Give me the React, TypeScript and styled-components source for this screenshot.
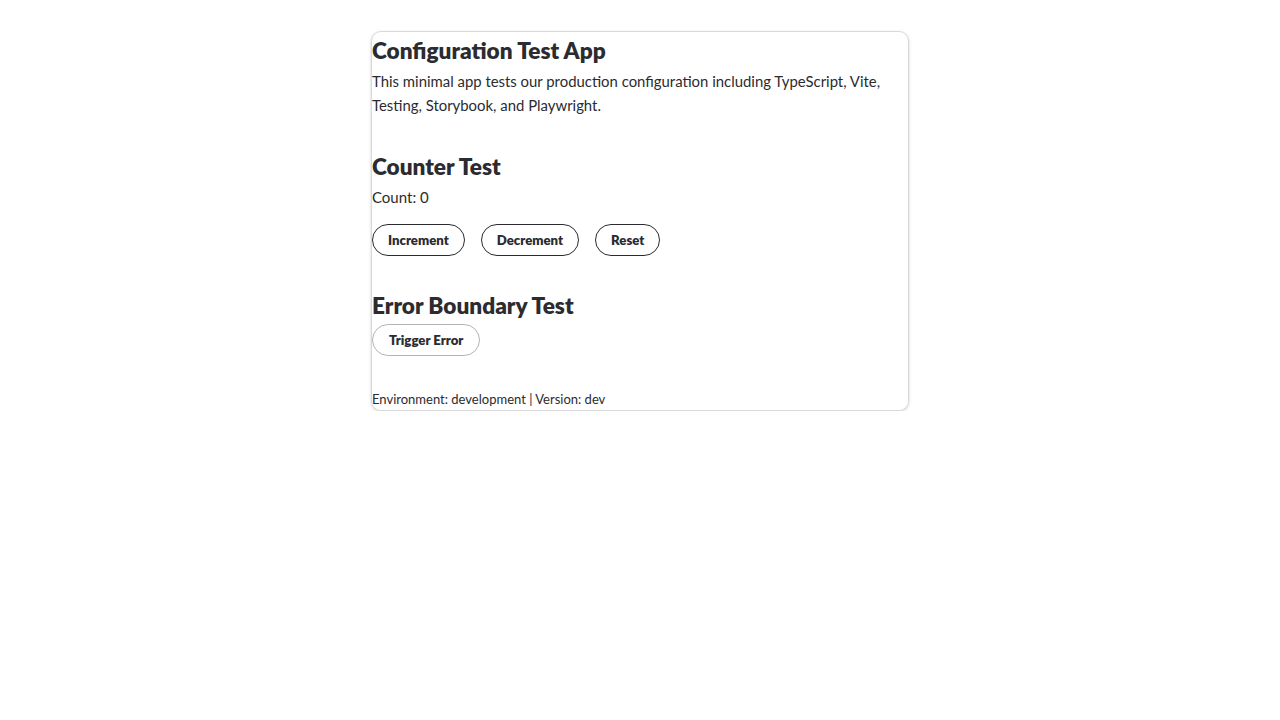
import React, { useState } from "react";
import styled, { createGlobalStyle } from "styled-components";

const GlobalStyle = createGlobalStyle`
  html, body { margin: 0; padding: 0; background: #ffffff; }
  body { font-family: Lato, "Open Sans", sans-serif; color: #2b2b30; }
`;

const Page = styled.div`
  display: flex;
  justify-content: center;
  padding-top: 31px;
`;

const Card = styled.main`
  width: 536px;
  border: 1px solid #d9d9d9;
  border-radius: 10px;
  box-shadow: 0 1px 3px rgba(0, 0, 0, 0.18);
  display: flex;
  flex-direction: column;
`;

const Title = styled.h1`
  margin: 0;
  font-size: 22.6px;
  line-height: 37px;
  font-weight: 800;
  color: #2b2b30;
`;

const Intro = styled.p`
  margin: 0;
  font-size: 14.9px;
  line-height: 24px;
`;

const Section = styled.section`
  margin-top: 32px;
  display: flex;
  flex-direction: column;
  align-items: flex-start;
`;

const SectionTitle = styled.h2`
  margin: 0;
  font-size: 22.6px;
  line-height: 36px;
  font-weight: 800;
`;

const CountText = styled.p`
  margin: 0;
  font-size: 15px;
  line-height: 24px;
`;

const ButtonRow = styled.div`
  display: flex;
  gap: 16px;
  margin-top: 15px;
`;

const PillButton = styled.button<{ $muted?: boolean }>`
  height: 32px;
  padding: 0 ${(p) => (p.$muted ? "16px" : "15px")};
  border-radius: 999px;
  border: 1px solid ${(p) => (p.$muted ? "#b5b5b5" : "#2b2b30")};
  background: #ffffff;
  color: #2b2b30;
  font-family: inherit;
  font-size: 13.2px;
  font-weight: 800;
  cursor: pointer;
`;

const Footer = styled.footer`
  margin-top: 32px;
  font-size: 13px;
  line-height: 22px;
`;

export default function App() {
  const [count, setCount] = useState(0);
  return (
    <>
      <GlobalStyle />
      <Page>
        <Card>
          <Title>Configuration Test App</Title>
          <Intro>
            This minimal app tests our production configuration including TypeScript, Vite,
            Testing, Storybook, and Playwright.
          </Intro>
          <Section>
            <SectionTitle>Counter Test</SectionTitle>
            <CountText>Count: {count}</CountText>
            <ButtonRow>
              <PillButton onClick={() => setCount((c) => c + 1)}>Increment</PillButton>
              <PillButton onClick={() => setCount((c) => c - 1)}>Decrement</PillButton>
              <PillButton onClick={() => setCount(0)}>Reset</PillButton>
            </ButtonRow>
          </Section>
          <Section>
            <SectionTitle>Error Boundary Test</SectionTitle>
            <PillButton $muted>Trigger Error</PillButton>
          </Section>
          <Footer>Environment: development | Version: dev</Footer>
        </Card>
      </Page>
    </>
  );
}
